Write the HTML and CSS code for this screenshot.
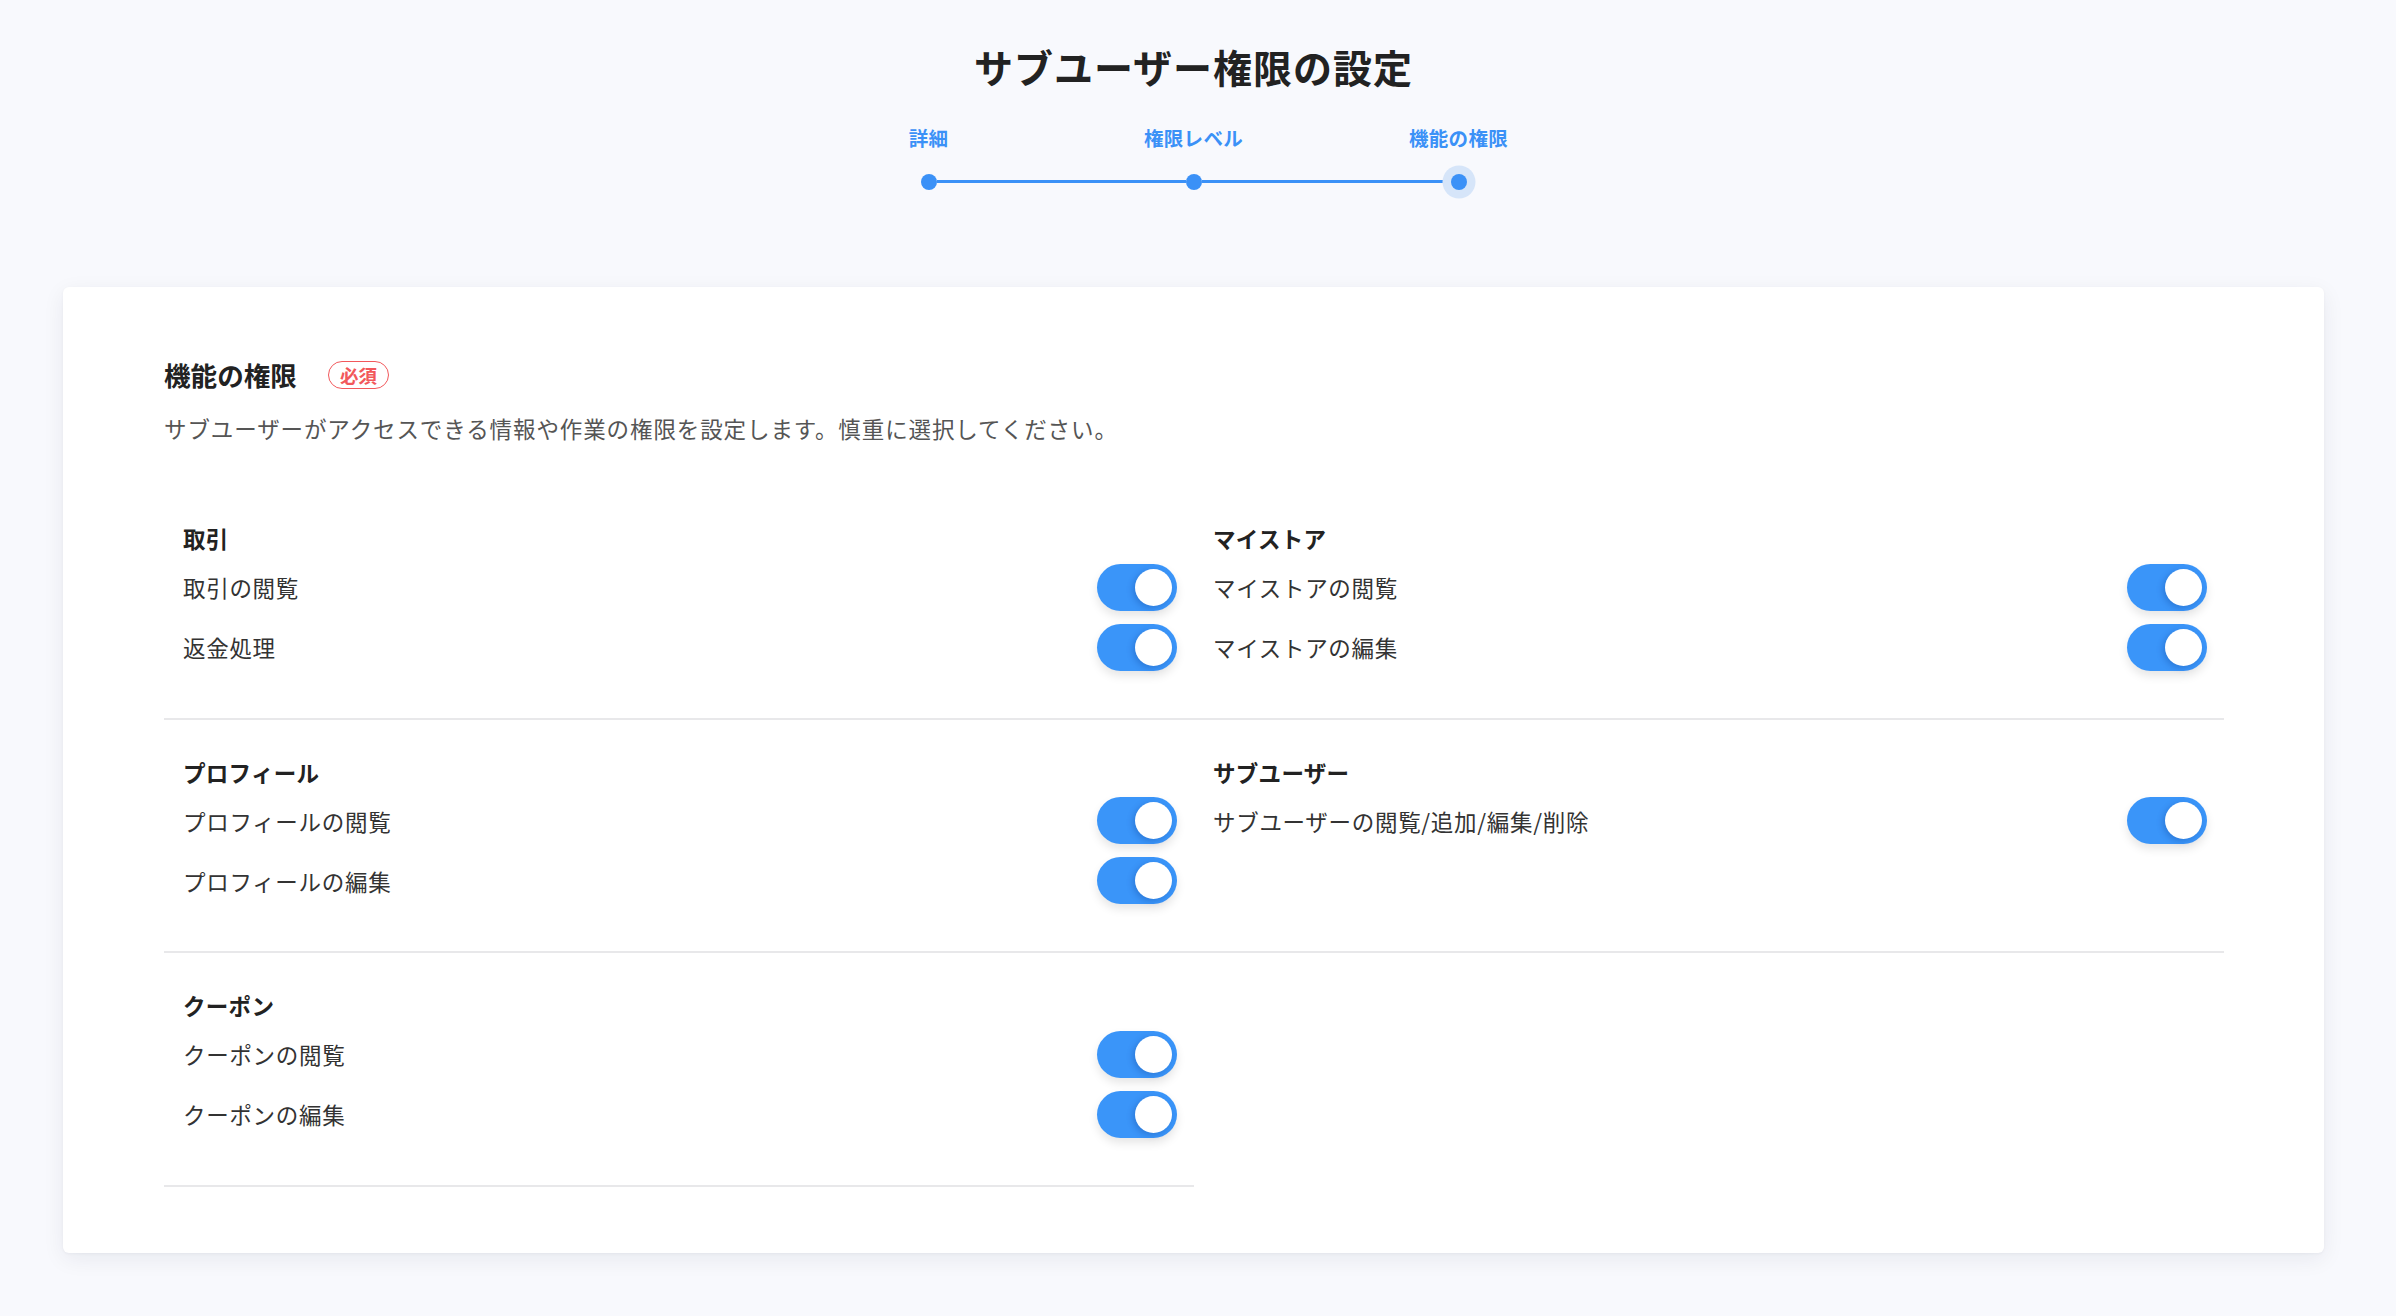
FILE: index.html
```html
<!DOCTYPE html>
<html lang="ja">
<head>
<meta charset="utf-8">
<title>サブユーザー権限の設定</title>
<link rel="stylesheet" href="styles.css">
</head>
<body>
<div class="page">
  <h1 class="title">サブユーザー権限の設定</h1>
  <div class="steps">
    <div class="step first">
      <span class="step-label">詳細</span>
      <div class="track"><span class="seg"></span><span class="dot"></span><span class="seg"></span></div>
    </div>
    <div class="step">
      <span class="step-label">権限レベル</span>
      <div class="track"><span class="seg"></span><span class="dot"></span><span class="seg"></span></div>
    </div>
    <div class="step last">
      <span class="step-label">機能の権限</span>
      <div class="track"><span class="seg"></span><span class="dot active"></span><span class="seg"></span></div>
    </div>
  </div>

  <section class="card">
    <div class="card-head">
      <h2 class="card-title">機能の権限</h2>
      <span class="badge">必須</span>
    </div>
    <p class="desc">サブユーザーがアクセスできる情報や作業の権限を設定します。慎重に選択してください。</p>

    <div class="grid">
      <div class="cell">
        <h3 class="group">取引</h3>
        <div class="row"><span class="label">取引の閲覧</span><span class="toggle"><span class="knob"></span></span></div>
        <div class="row"><span class="label">返金処理</span><span class="toggle"><span class="knob"></span></span></div>
      </div>
      <div class="cell">
        <h3 class="group">マイストア</h3>
        <div class="row"><span class="label">マイストアの閲覧</span><span class="toggle"><span class="knob"></span></span></div>
        <div class="row"><span class="label">マイストアの編集</span><span class="toggle"><span class="knob"></span></span></div>
      </div>
      <div class="cell">
        <h3 class="group">プロフィール</h3>
        <div class="row"><span class="label">プロフィールの閲覧</span><span class="toggle"><span class="knob"></span></span></div>
        <div class="row"><span class="label">プロフィールの編集</span><span class="toggle"><span class="knob"></span></span></div>
      </div>
      <div class="cell">
        <h3 class="group">サブユーザー</h3>
        <div class="row"><span class="label">サブユーザーの閲覧/追加/編集/削除</span><span class="toggle"><span class="knob"></span></span></div>
      </div>
      <div class="cell">
        <h3 class="group">クーポン</h3>
        <div class="row"><span class="label">クーポンの閲覧</span><span class="toggle"><span class="knob"></span></span></div>
        <div class="row"><span class="label">クーポンの編集</span><span class="toggle"><span class="knob"></span></span></div>
      </div>
    </div>
  </section>
</div>
</body>
</html>
```
FILE: styles.css
```css
* { box-sizing: border-box; }
html, body { margin: 0; padding: 0; }
body {
  background: #f8f9fd;
  font-family: "Noto Sans CJK JP", "Noto Sans", sans-serif;
  color: #222;
}
.page {
  padding: 43px 72px 60px 63px;
  display: flex;
  flex-direction: column;
  align-items: center;
}
.title {
  margin: 0;
  font-size: 39px;
  line-height: 47px;
  font-weight: 700;
  color: #222;
  letter-spacing: 1px;
}
.steps {
  display: flex;
  margin-top: 36px;
}
.step {
  width: 265px;
  display: flex;
  flex-direction: column;
  align-items: center;
}
.step-label {
  font-size: 19.5px;
  line-height: 24px;
  font-weight: 700;
  color: #3b91f7;
  letter-spacing: 0.3px;
}
.track {
  margin-top: 15px;
  width: 100%;
  height: 33px;
  display: flex;
  align-items: center;
}
.seg {
  flex: 1;
  height: 3px;
  background: #3b91f7;
}
.step.first .seg:first-child,
.step.last .seg:last-child { background: transparent; }
.dot {
  width: 16px;
  height: 16px;
  border-radius: 50%;
  background: #3b91f7;
  flex: none;
}
.dot.active { box-shadow: 0 0 0 8.5px #d6e5f9; }

.card {
  align-self: stretch;
  margin-top: 89px;
  background: #fff;
  border-radius: 6px;
  box-shadow: 0 6px 22px rgba(20, 30, 60, 0.07), 0 1px 3px rgba(20, 30, 60, 0.04);
  padding: 70px 100px 66px 101px;
}
.card-head {
  display: flex;
  align-items: center;
  height: 36px;
}
.card-title {
  margin: 0;
  font-size: 26.6px;
  line-height: 36px;
  font-weight: 700;
  color: #222;
}
.badge {
  margin-left: 31px;
  width: 61px;
  height: 28px;
  border: 1.5px solid #f2585b;
  border-radius: 14px;
  color: #f2585b;
  font-size: 18.5px;
  font-weight: 700;
  display: flex;
  align-items: center;
  justify-content: center;
  line-height: 1;
}
.desc {
  margin: 18px 0 0;
  font-size: 22.5px;
  line-height: 34px;
  color: #555;
  letter-spacing: 0.9px;
}
.grid {
  margin-top: 41px;
  display: grid;
  grid-template-columns: 1fr 1fr;
}
.cell {
  padding: 40px 17px 47px 19px;
  border-bottom: 2px solid #e8e8ea;
  display: flex;
  flex-direction: column;
  gap: 13px;
}
.group {
  margin: 0 0 0.5px;
  font-size: 22.5px;
  line-height: 24px;
  font-weight: 700;
  color: #222;
  letter-spacing: 0.3px;
}
.row {
  display: flex;
  align-items: center;
  justify-content: space-between;
  height: 47px;
}
.label {
  font-size: 22.5px;
  line-height: 30px;
  color: #333;
  letter-spacing: 0.7px;
}
.toggle {
  width: 80px;
  height: 47px;
  border-radius: 24px;
  background: #3a95f9;
  padding: 5px;
  display: flex;
  justify-content: flex-end;
  box-shadow: 0 5px 10px rgba(0, 0, 0, 0.1);
}
.knob {
  width: 37px;
  height: 37px;
  border-radius: 50%;
  background: #fff;
  box-shadow: -2px 2px 6px rgba(0, 40, 120, 0.25);
}
```
